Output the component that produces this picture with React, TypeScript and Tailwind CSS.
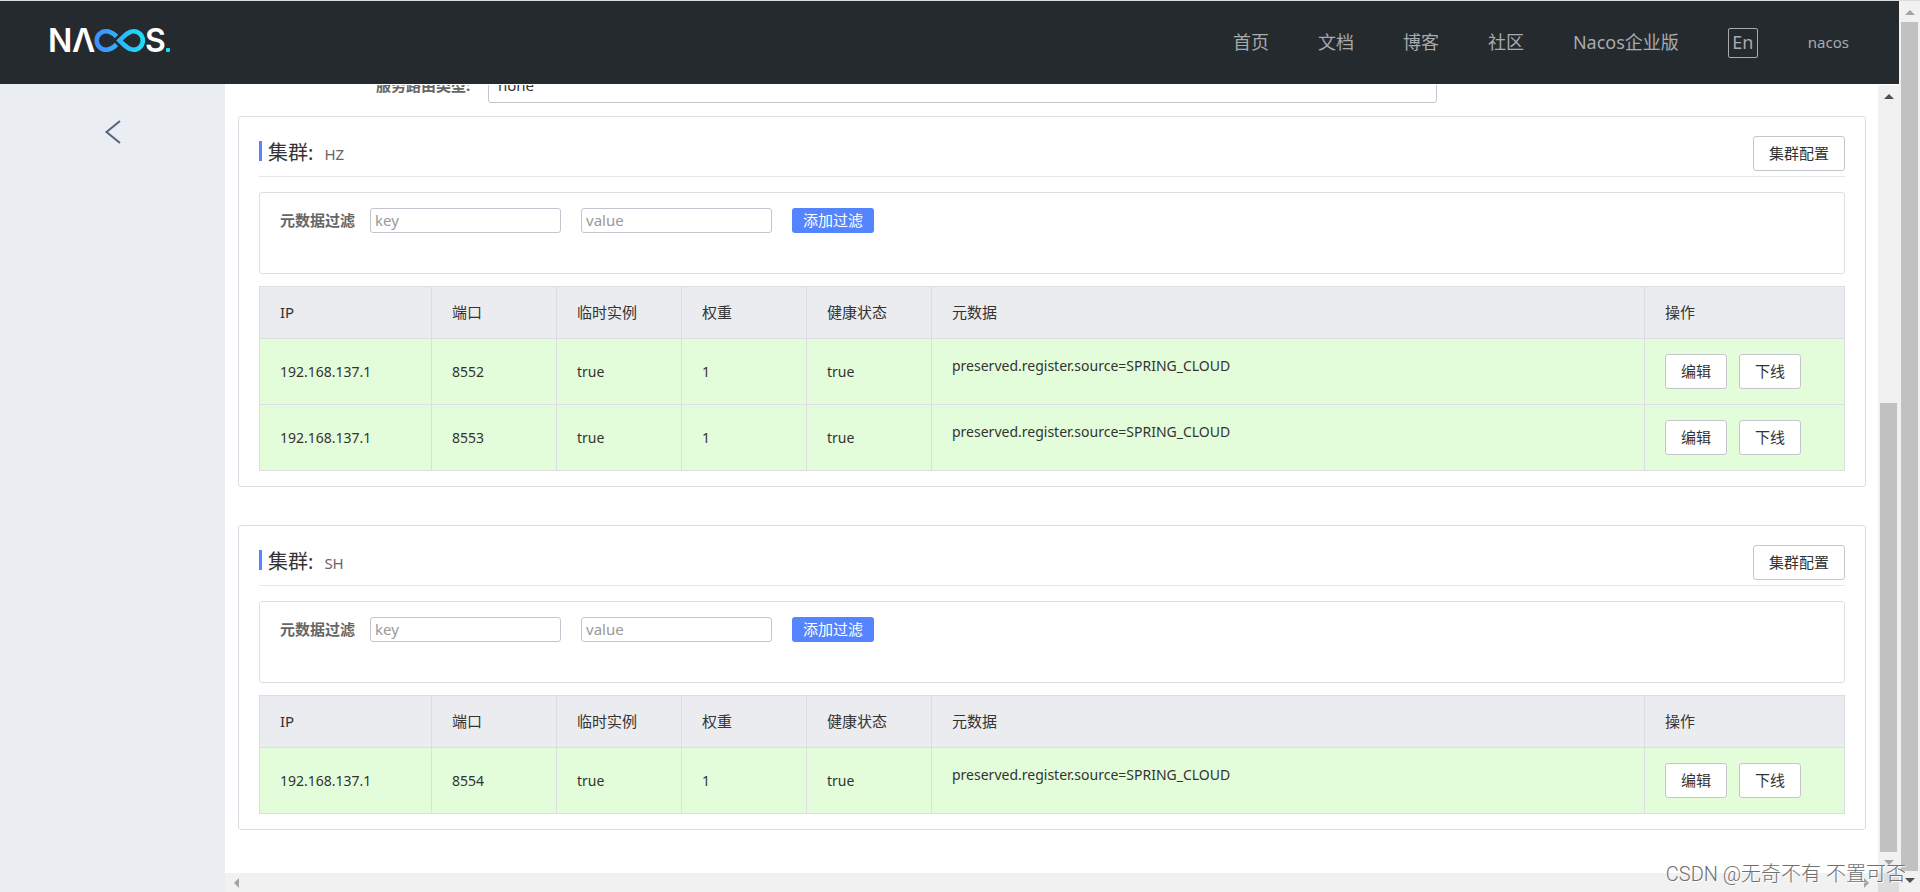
import { useState } from "react";
import clsx from "clsx";

type Instance = {
  ip: string;
  port: number;
  ephemeral: boolean;
  weight: number;
  healthy: boolean;
  metadata: string;
};

type Cluster = {
  name: string;
  instances: Instance[];
};

const makeInstance = (port: number): Instance => ({
  ip: "192.168.137.1",
  port,
  ephemeral: true,
  weight: 1,
  healthy: true,
  metadata: "preserved.register.source=SPRING_CLOUD",
});

const clusters: Cluster[] = [
  { name: "HZ", instances: [makeInstance(8552), makeInstance(8553)] },
  { name: "SH", instances: [makeInstance(8554)] },
];

const navItems = ["首页", "文档", "博客", "社区", "Nacos企业版"];

const columns = [
  { title: "IP", width: "w-[172px]" },
  { title: "端口", width: "w-[125px]" },
  { title: "临时实例", width: "w-[125px]" },
  { title: "权重", width: "w-[125px]" },
  { title: "健康状态", width: "w-[125px]" },
  { title: "元数据", width: "" },
  { title: "操作", width: "w-[200px]" },
];

const Logo = () => (
  <svg width="128" height="48" viewBox="-2 -8 128 48" role="img" aria-label="Nacos">
    <defs>
      <linearGradient id="loop" gradientUnits="userSpaceOnUse" x1="46" y1="0" x2="97" y2="0">
        <stop offset="0" stopColor="#428bff" />
        <stop offset="1" stopColor="#19e2f8" />
      </linearGradient>
    </defs>
    <g className="font-['Inter'] text-[32px] font-semibold" fill="#fff">
      <text x="-1" y="25">N</text>
      <text x="23" y="25">Λ</text>
      <text x="96" y="25">S</text>
    </g>
    <g fill="none" stroke="url(#loop)" strokeWidth="4.6">
      <path d="M67.5 9.500 C64 6 61 4.200 57 4.200 A9.300 9.300 0 0 0 57 22.800 C61 22.800 64 21 67.500 17.500" />
      <path d="M70.500 13.500 C76 8 79.500 4.200 84.500 4.200 A9.300 9.300 0 0 1 84.500 22.800 C79.500 22.800 76 19 70.500 13.500 Z" />
    </g>
    <rect x="117" y="21" width="4" height="4" rx="1" fill="#19e2f8" />
  </svg>
);

const Header = () => (
  <header className="flex h-[84px] shrink-0 items-center justify-between border-t border-[#dcdcdc] bg-[#252a2f] pl-[47px] pr-[50px] text-[#a8aaac]">
    <a href="#home">
      <Logo />
    </a>
    <nav className="flex items-center gap-[49px] text-[18px]">
      {navItems.map((item) => (
        <a key={item} href="#nav">
          {item}
        </a>
      ))}
      <button className="mr-px flex h-[30px] w-[30px] justify-center rounded-xs border border-[#a8aaac] leading-[26px]">
        En
      </button>
      <a href="#user" className="text-[15px]">
        nacos
      </a>
    </nav>
  </header>
);

type ArrowProp = { dir: "up" | "down" | "left" | "right"; dark?: boolean };

const Arrow = ({ dir, dark }: ArrowProp) => (
  <svg
    width="10"
    height="10"
    viewBox="0 0 10 10"
    className={clsx(
      dir === "right" && "rotate-90",
      dir === "down" && "rotate-180",
      dir === "left" && "-rotate-90"
    )}
  >
    <path d="M0 8 L5 3 L10 8 Z" fill={dark ? "#505050" : "#a3a3a3"} />
  </svg>
);

const Button = ({ children }: { children: string }) => (
  <button className="h-[35px] rounded-[3px] border border-[#c4c6cf] bg-white px-[15px] text-[15px] text-[#333]">
    {children}
  </button>
);

const MetadataFilter = ({ name }: { name: string }) => {
  const [key, setKey] = useState("");
  const [value, setValue] = useState("");

  const inputClass =
    "h-[25px] w-[191px] rounded-[3px] border border-[#c4c6cf] bg-white px-1 pb-[2px] text-[15px] outline-none placeholder:text-[#999]";

  return (
    <form className="mt-[15px] flex h-[82px] items-start rounded-[3px] border border-[#dcdee3] px-5 pt-[15px]">
      <label htmlFor={`key-${name}`} className="mr-[15px] text-[15px] font-bold leading-[25px] text-[#666]">
        元数据过滤
      </label>
      <input
        id={`key-${name}`}
        className={inputClass}
        placeholder="key"
        value={key}
        onChange={(e) => setKey(e.target.value)}
      />
      <input
        aria-label="value"
        className={clsx(inputClass, "ml-5")}
        placeholder="value"
        value={value}
        onChange={(e) => setValue(e.target.value)}
      />
      <button type="button" className="ml-5 h-[25px] rounded-[3px] bg-[#5584ff] px-[11px] text-[15px] text-white">
        添加过滤
      </button>
    </form>
  );
};

const InstanceTable = ({ instances }: { instances: Instance[] }) => {
  const cell = "border border-[#dcdee3] px-5";

  return (
    <table className="mt-3 w-full table-fixed border-collapse text-left text-[#333]">
      <thead>
        <tr className="h-[52px] bg-[#ebecf0] text-[15px]">
          {columns.map((col) => (
            <th key={col.title} className={clsx(cell, col.width, "font-normal")}>
              {col.title}
            </th>
          ))}
        </tr>
      </thead>
      <tbody>
        {instances.map((it) => (
          <tr key={it.port} className="h-[66px] bg-[#e3fdda] text-[14px]">
            <td className={cell}>{it.ip}</td>
            <td className={cell}>{it.port}</td>
            <td className={cell}>{String(it.ephemeral)}</td>
            <td className={cell}>{it.weight}</td>
            <td className={cell}>{String(it.healthy)}</td>
            <td className={cell}>
              <p className="pb-3">{it.metadata}</p>
            </td>
            <td className={cell}>
              <div className="flex gap-3">
                <Button>编辑</Button>
                <Button>下线</Button>
              </div>
            </td>
          </tr>
        ))}
      </tbody>
    </table>
  );
};

const ClusterCard = ({ cluster }: { cluster: Cluster }) => (
  <section className="rounded-[3px] border border-[#dcdee3] px-5 pb-[15px] pt-[19px]">
    <div className="flex items-start justify-between border-b border-[#e6e7eb] pb-[5px]">
      <h2 className="flex items-start pt-[5px] text-[20px] leading-6 text-[#333]">
        <span className="mr-[6px] h-5 w-[3px] bg-[#5584ff]" />
        集群:
        <span className="ml-[11px] pt-px text-[15px] text-[#666]">{cluster.name}</span>
      </h2>
      <Button>集群配置</Button>
    </div>
    <MetadataFilter name={cluster.name} />
    <InstanceTable instances={cluster.instances} />
  </section>
);

function App() {
  return (
    <div className="relative flex h-screen overflow-hidden bg-white font-['Noto_Sans','Noto_Sans_CJK_SC',sans-serif]">
      <div className="flex min-w-0 flex-1 flex-col">
        <Header />
        <div className="flex min-h-0 flex-1">
          <aside className="w-[225px] shrink-0 bg-[#eaedf2]">
            <button aria-label="返回" className="ml-[104px] mt-9 block">
              <svg width="18" height="24" viewBox="0 0 18 24" fill="none" stroke="#546478" strokeWidth="2">
                <path d="M16 1 L2.500 12 L16 23" />
              </svg>
            </button>
          </aside>

          <div className="flex min-w-0 flex-1 flex-col">
            <div className="flex min-h-0 flex-1 pt-px">
              <main className="min-w-0 flex-1 overflow-hidden pl-[13px] pr-3">
                <div className="-mt-[17px] flex items-center pl-[138px]">
                  <label htmlFor="route" className="w-[112px] shrink-0 text-[15px] font-bold leading-[35px] text-[#666]">
                    服务路由类型:
                  </label>
                  <input
                    id="route"
                    readOnly
                    value="none"
                    className="h-[35px] w-full max-w-[949px] rounded-[3px] border border-[#c4c6cf] px-[9px] pb-[2px] text-[15px] text-[#333]"
                  />
                </div>
                <div className="mt-[13px] flex flex-col gap-[38px]">
                  {clusters.map((cluster) => (
                    <ClusterCard key={cluster.name} cluster={cluster} />
                  ))}
                </div>
              </main>
              <div className="flex w-[21px] shrink-0 flex-col items-center bg-[#f1f1f1] pb-[5px] pt-[6px]">
                <Arrow dir="up" dark />
                <div className="mt-auto mb-[6px] h-[449px] w-[17px] bg-[#c1c1c1]" />
                <Arrow dir="down" />
              </div>
            </div>
            <div className="flex h-[19px] shrink-0 items-center bg-[#f1f1f1]">
              <div className="flex flex-1 justify-between px-[6px]">
                <Arrow dir="left" />
                <Arrow dir="right" />
              </div>
              <div className="h-full w-[21px] bg-[#dcdcdc]" />
            </div>
          </div>
        </div>
      </div>

      <div className="flex w-[21px] shrink-0 flex-col items-center border-t border-[#dcdcdc] bg-[#f1f1f1] py-[6px]">
        <Arrow dir="up" />
        <div className="my-[5px] w-[17px] flex-1 bg-[#c1c1c1]" />
        <Arrow dir="down" dark />
      </div>

      <p className="absolute bottom-1 right-[14px] font-['Roboto','Noto_Sans_CJK_SC',sans-serif] text-[20px] font-light leading-7 text-[#707070] [text-shadow:1px_1px_1px_#fff]">
        CSDN @无奇不有 不置可否
      </p>
    </div>
  );
}

export default App;
